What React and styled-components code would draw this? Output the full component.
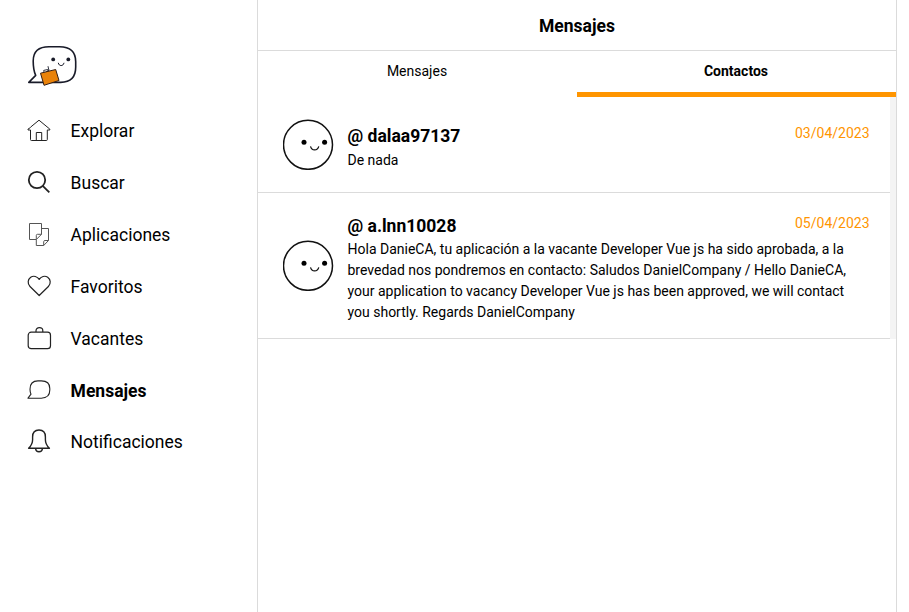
import React from "react";
import styled, { createGlobalStyle } from "styled-components";

const GlobalStyle = createGlobalStyle`
  * { box-sizing: border-box; }
  body { margin: 0; background: #fff; color: #000; font-family: Roboto, sans-serif; overflow: hidden; }
  h1, h2, p { margin: 0; }
`;

const Page = styled.div`
  display: flex;
  height: 100vh;
`;

const Sidebar = styled.aside`
  width: 258px;
  flex: none;
  border-right: 1px solid #dbdbdb;
  padding: 42px 0 0 27px;
`;

const LogoMark = styled.svg`
  display: block;
  width: 52px;
  height: 48px;
`;

const Nav = styled.nav`
  display: flex;
  flex-direction: column;
  padding-top: 15.5px;
`;

const NavItem = styled.a`
  display: flex;
  align-items: center;
  height: 51.83px;
  gap: 19.6px;
  font-size: 17.5px;
  line-height: 24px;
  font-weight: ${(p) => (p.$active ? 700 : 400)};
`;

const Icon = styled.svg`
  width: 24px;
  height: 24px;
  flex: none;
  overflow: visible;
  fill: none;
  stroke: ${(p) => p.$tone || "#222"};
  stroke-width: ${(p) => p.$weight || 1.2};
  stroke-linejoin: round;
`;

const Main = styled.main`
  width: 639px;
  flex: none;
  border-right: 1px solid #dbdbdb;
`;

const Header = styled.header`
  display: flex;
  align-items: center;
  justify-content: center;
  height: 51px;
  padding-top: 1px;
  border-bottom: 1px solid #dbdbdb;
`;

const Title = styled.h1`
  font-size: 17.5px;
  line-height: 28px;
  font-weight: 700;
`;

const Tabs = styled.div`
  display: grid;
  grid-template-columns: 1fr 1fr;
  height: 46px;
`;

const Tab = styled.div`
  text-align: center;
  padding: 10px 1px 0 0;
  font-size: 14px;
  line-height: 21px;
  font-weight: ${(p) => (p.$active ? 700 : 400)};
  border-bottom: 5px solid ${(p) => (p.$active ? "#ff9500" : "transparent")};
`;

const List = styled.section`
  border-right: 6px solid #f4f4f4;
`;

const Contact = styled.article`
  display: flex;
  align-items: center;
  gap: 13.5px;
  height: ${(p) => (p.$tall ? 146 : 96)}px;
  padding: 0 20.5px 0 25px;
  border-bottom: 1px solid #dbdbdb;
`;

const Avatar = styled.svg`
  width: 51px;
  height: 51px;
  flex: none;
`;

const Details = styled.div`
  flex: 1;
  min-width: 0;
  padding-top: 4px;
`;

const ContactTop = styled.div`
  display: flex;
  justify-content: space-between;
  height: 27.5px;
`;

const Name = styled.h2`
  font-size: 17.5px;
  line-height: 29px;
  font-weight: 700;
`;

const DateText = styled.time`
  margin-top: 1px;
  font-size: 14px;
  line-height: 21px;
  color: #ff9500;
`;

const Message = styled.p`
  width: 502px;
  font-size: 14px;
  line-height: 21px;
`;

const navigation = [
  {
    label: "Explorar",
    weight: 1,
    drawing: <path d="M3.5 8.5 1 10.1V11h2.5v9.6q0 .9.9.9h15q.9 0 .9-.9V11h2.5v-.9L12 1.2 3.5 8.2M9.3 21.3v-7.8h5.4v7.8" />,
  },
  {
    label: "Buscar",
    weight: 1.8,
    drawing: <><circle cx="10" cy="9" r="8.2" /><path d="m16 15.2 6.3 6.1" /></>,
  },
  {
    label: "Aplicaciones",
    weight: 1,
    tone: "#555",
    drawing: <path d="M9.3 16.5H2.5V.5h12v10.8l-5.2 5.2v6h7.4l4.8-5V5.5h-7M9.3 16.5v-4q0-1.2 1.2-1.2h4M16.7 22.5v-3.8q0-1.2 1.2-1.2h3.6" />,
  },
  {
    label: "Favoritos",
    drawing: <path d="M12.2 20.5 3 11.5C.2 8.7.8 4.2 3.7 2.2c2.9-1.9 6.7-.8 8.5 2.2 1.8-3 5.6-4.1 8.5-2.2 2.9 2 3.5 6.500.7 9.300z" />,
  },
  {
    label: "Vacantes",
    drawing: <><rect x="1.2" y="5.2" width="22.3" height="16.5" rx="3" /><path d="M9 5V3.7C9 1.7 10.4.7 12.4.7s3.4 1 3.4 3V5" /></>,
  },
  {
    label: "Mensajes",
    active: true,
    weight: 1.1,
    drawing: <path d="M1 19.2 4 15.200C3.300 13.600 3 12 3 10.200 3 5 6 1.900 11 1.900h3.300c5.500 0 8.500 3 8.500 7.600v1.600c0 5-3 8.100-8.500 8.100z" />,
  },
  {
    label: "Notificaciones",
    weight: 1.4,
    drawing: <path d="M1.6 18.2c2.5-2.400 4-4.200 4-8.500V6.900c0-4.500 2.400-6.900 6.400-6.900s6.400 2.400 6.400 6.900v2.800c0 4.300 1.500 6.100 4 8.500zM8.600 18.700c.3 4 6.500 4 6.800 0" />,
  },
];

const contacts = [
  { name: "dalaa97137", date: "03/04/2023", message: "De nada" },
  {
    name: "a.lnn10028",
    date: "05/04/2023",
    tall: true,
    message:
      "Hola DanieCA, tu aplicación a la vacante Developer Vue js ha sido aprobada, a la brevedad nos pondremos en contacto: Saludos DanielCompany / Hello DanieCA, your application to vacancy Developer Vue js has been approved, we will contact you shortly. Regards DanielCompany",
  },
];

function Logo() {
  return (
    <LogoMark viewBox="0 0 52 48" fill="none">
      <path d="M1.8 40.4 8.700 33.400C6.900 29.500 6.200 24.500 6.200 19 6.200 9.800 11.500 4.800 22 4.800h10.500c10.500 0 16.200 5.300 16.200 15v5.300c0 9.700-5.200 15.300-15 15.300z" stroke="#191b29" strokeWidth="1.6" strokeLinejoin="round" />
      <circle cx="26.2" cy="17.4" r="1.9" fill="#191b29" />
      <circle cx="41.3" cy="17.4" r="1.9" fill="#191b29" />
      <path d="M31.3 20.8c.5 3.7 5.1 3.7 5.7 0" stroke="#191b29" />
      <path d="m17.2 31.2-.5-2.8 4-.9 1 2.8M21.8 28l-.8-3.8M18.7 30l3.8-1.8" stroke="#191b29" strokeWidth=".9" />
      <path d="m13.5 31.2 15.2-3.7 3.3 11-15 4.8z" fill="#e98209" stroke="#351f15" strokeWidth="1" />
    </LogoMark>
  );
}

function Face() {
  return (
    <Avatar viewBox="0 0 51 51" fill="none">
      <circle cx="25" cy="25.8" r="24.5" stroke="#111" strokeWidth="1.5" />
      <circle cx="21" cy="23.2" r="2.5" fill="#000" />
      <circle cx="41.6" cy="23.2" r="2.5" fill="#000" />
      <path d="M27.5 27.4c1.2 4.7 7 4.7 8.3 0" stroke="#111" strokeWidth="1.2" />
    </Avatar>
  );
}

export default function App() {
  return (
    <>
      <GlobalStyle />
      <Page>
        <Sidebar>
          <Logo />
          <Nav>
            {navigation.map((item) => (
              <NavItem key={item.label} $active={item.active}>
                <Icon viewBox="0 0 24 24" $weight={item.weight} $tone={item.tone}>{item.drawing}</Icon>
                <span>{item.label}</span>
              </NavItem>
            ))}
          </Nav>
        </Sidebar>
        <Main>
          <Header><Title>Mensajes</Title></Header>
          <Tabs>
            <Tab>Mensajes</Tab>
            <Tab $active>Contactos</Tab>
          </Tabs>
          <List>
            {contacts.map((contact) => (
              <Contact key={contact.name} $tall={contact.tall}>
                <Face />
                <Details>
                  <ContactTop>
                    <Name>@ {contact.name}</Name>
                    <DateText>{contact.date}</DateText>
                  </ContactTop>
                  <Message>{contact.message}</Message>
                </Details>
              </Contact>
            ))}
          </List>
        </Main>
      </Page>
    </>
  );
}
